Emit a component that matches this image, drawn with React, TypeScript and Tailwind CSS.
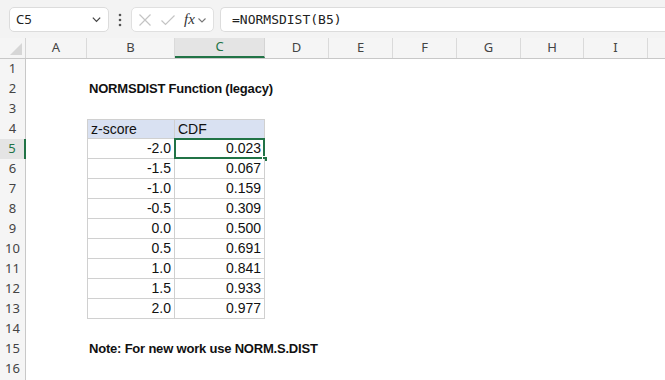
import React from 'react';

const cols = [
  { key: 'A', w: 'w-[61px]' },
  { key: 'B', w: 'w-[88px]' },
  { key: 'C', w: 'w-[90px]' },
  { key: 'D', w: 'w-[64px]' },
  { key: 'E', w: 'w-[64px]' },
  { key: 'F', w: 'w-[64px]' },
  { key: 'G', w: 'w-[64px]' },
  { key: 'H', w: 'w-[63px]' },
  { key: 'I', w: 'w-[64px]' },
  { key: 'J', w: 'w-[64px]' },
];

const data: [string, string][] = [
  ['-2.0', '0.023'],
  ['-1.5', '0.067'],
  ['-1.0', '0.159'],
  ['-0.5', '0.309'],
  ['0.0', '0.500'],
  ['0.5', '0.691'],
  ['1.0', '0.841'],
  ['1.5', '0.933'],
  ['2.0', '0.977'],
];

const uiFont = { fontFamily: '"Noto Sans", "Open Sans", sans-serif' };
const cellFont = { fontFamily: '"Liberation Sans", Arial, sans-serif' };

function Toolbar() {
  return (
    <div className="h-[38px] bg-[#f3f3f3] flex items-start pt-[7px] pl-[9px]">
      <div className="w-[100px] h-[25px] bg-white border border-[#dcdcdc] rounded-[5px] flex items-center justify-between pl-[6px] pr-[6px]">
        <span className="text-[13px] text-[#222]" style={uiFont}>C5</span>
        <svg width="11" height="11" viewBox="0 0 12 12">
          <path d="M2 4 L6 8 L10 4" stroke="#444" strokeWidth="1.4" fill="none" />
        </svg>
      </div>
      <div className="w-[22px] h-[25px] flex items-center justify-center">
        <svg width="4" height="14" viewBox="0 0 4 14">
          <circle cx="2" cy="2" r="1.3" fill="#555" />
          <circle cx="2" cy="7" r="1.3" fill="#555" />
          <circle cx="2" cy="12" r="1.3" fill="#555" />
        </svg>
      </div>
      <div className="w-[83px] h-[25px] bg-white border border-[#e0e0e0] rounded-[5px] flex items-center pl-[6px] gap-[8px]">
        <svg width="14" height="14" viewBox="0 0 14 14">
          <path d="M1.5 1.5 L12.5 12.5 M12.5 1.5 L1.5 12.5" stroke="#c4c4c4" strokeWidth="1.2" fill="none" />
        </svg>
        <svg width="16" height="14" viewBox="0 0 16 14">
          <path d="M1.5 7.5 L5.5 11.5 L14.5 2.5" stroke="#c4c4c4" strokeWidth="1.2" fill="none" />
        </svg>
        <span className="flex items-center gap-[2px]">
          <span className="text-[15px] italic text-[#333] leading-none" style={{ fontFamily: '"Liberation Serif", "DejaVu Serif", serif' }}>
            fx
          </span>
          <svg width="10" height="10" viewBox="0 0 10 10">
            <path d="M1.5 3.5 L5 7 L8.5 3.5" stroke="#777" strokeWidth="1.1" fill="none" />
          </svg>
        </span>
      </div>
      <div className="ml-[6px] flex-1 h-[25px] bg-white border border-[#dcdcdc] rounded-l-[5px] border-r-0 flex items-center pl-[11px]">
        <span className="text-[13px] text-[#222]" style={{ fontFamily: '"DejaVu Sans Mono", "Liberation Mono", monospace' }}>
          =NORMSDIST(B5)
        </span>
      </div>
    </div>
  );
}

function ColumnHeaders() {
  return (
    <div className="flex h-[21px] bg-[#f5f5f5] border-b border-[#c8c8c8]" style={uiFont}>
      <div className="w-[26px] shrink-0 border-r border-[#d4d4d4] relative">
        <svg className="absolute right-[3px] bottom-[3px]" width="12" height="12" viewBox="0 0 12 12">
          <path d="M12 0 L12 12 L0 12 Z" fill="#d6d6d6" />
        </svg>
      </div>
      {cols.map((c) =>
        c.key === 'C' ? (
          <div
            key={c.key}
            className={`${c.w} shrink-0 bg-[#e4e4e4] border-r border-[#d4d4d4] border-b-2 border-b-[#217346] flex items-center justify-center text-[13px] text-[#217346]`}
          >
            {c.key}
          </div>
        ) : (
          <div
            key={c.key}
            className={`${c.w} shrink-0 border-r border-[#dadada] flex items-center justify-center text-[13px] text-[#444]`}
          >
            {c.key}
          </div>
        )
      )}
    </div>
  );
}

function RowHeader({ n }: { n: number }) {
  const active = n === 5;
  return (
    <div
      className={
        active
          ? 'w-[26px] shrink-0 h-full bg-[#e4e4e4] border-r-2 border-r-[#217346] flex items-center justify-center text-[13px] text-[#217346]'
          : 'w-[26px] shrink-0 h-full bg-[#f5f5f5] border-r border-[#c8c8c8] flex items-center justify-center text-[13px] text-[#444]'
      }
      style={uiFont}
    >
      {n}
    </div>
  );
}

function Row({ n }: { n: number }) {
  const tableRow = n >= 4 && n <= 13;
  const isHead = n === 4;
  const d = n >= 5 && n <= 13 ? data[n - 5] : null;

  let bContent: React.ReactNode = null;
  let cContent: React.ReactNode = null;
  if (isHead) {
    bContent = <span className="pl-[3px]">z-score</span>;
    cContent = <span className="pl-[3px]">CDF</span>;
  } else if (d) {
    bContent = <span className="ml-auto pr-[3px]">{d[0]}</span>;
    cContent = <span className="ml-auto pr-[3px]">{d[1]}</span>;
  }

  const tb = tableRow
    ? `border-b border-[#d0d0d0] ${isHead ? 'bg-[#d9e1f2] border-t' : 'bg-white'}`
    : '';

  return (
    <div className="flex h-[20px] text-[14px] text-[#111]" style={cellFont}>
      <RowHeader n={n} />
      <div className="w-[61px] shrink-0 relative">
        {n === 2 && (
          <span className="absolute left-[63px] top-0 h-full flex items-center font-bold whitespace-nowrap text-[13px] tracking-[-0.2px]">
            NORMSDIST Function (legacy)
          </span>
        )}
        {n === 15 && (
          <span className="absolute left-[63px] top-0 h-full flex items-center font-bold whitespace-nowrap text-[13px] tracking-[-0.2px]">
            Note: For new work use NORM.S.DIST
          </span>
        )}
      </div>
      <div className={`w-[88px] shrink-0 flex items-center ${tableRow ? `border-l border-r border-[#d0d0d0] ${tb}` : ''}`}>
        {bContent}
      </div>
      <div className={`w-[90px] shrink-0 flex items-center relative ${tableRow ? `border-r border-[#d0d0d0] ${tb}` : ''}`}>
        {cContent}
        {n === 5 && (
          <>
            <div className="absolute left-[-1px] top-[-1px] right-[-1px] bottom-[-1px] border-2 border-[#217346]" />
            <div className="absolute right-[-4px] bottom-[-4px] w-[6px] h-[6px] bg-[#217346] border border-white" />
          </>
        )}
      </div>
      <div className="flex-1" />
    </div>
  );
}

export default function App() {
  return (
    <div className="w-[665px] h-[380px] overflow-hidden bg-white">
      <Toolbar />
      <ColumnHeaders />
      {Array.from({ length: 17 }, (_, i) => (
        <Row key={i + 1} n={i + 1} />
      ))}
    </div>
  );
}
